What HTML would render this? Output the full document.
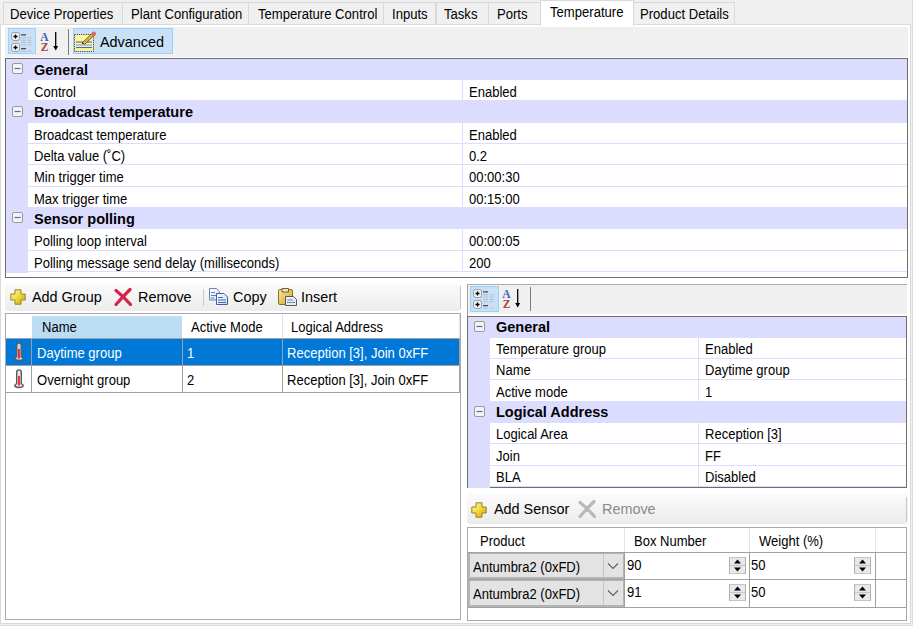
<!DOCTYPE html><html><head><meta charset="utf-8"><style>
html,body{margin:0;padding:0;}
body{width:913px;height:626px;overflow:hidden;position:relative;background:#f0f0f0;font-family:"Liberation Sans",sans-serif;font-size:13px;color:#000;}
div{box-sizing:border-box;}
.t{position:absolute;white-space:pre;line-height:normal;}
.t > span{display:inline-block;}
</style></head><body>
<div style="position:absolute;left:0px;top:24px;width:913px;height:602px;background:#fff;border-left:1px solid #d9d9d9;border-top:1px solid #d9d9d9;"></div>
<div style="position:absolute;left:910px;top:24px;width:1px;height:600px;background:#d9d9d9;"></div>
<div style="position:absolute;left:0px;top:623px;width:911px;height:1px;background:#d9d9d9;"></div>
<div style="position:absolute;left:911px;top:0px;width:2px;height:626px;background:#f0f0f0;"></div>
<div style="position:absolute;left:912px;top:0px;width:1px;height:626px;background:#dcdcdc;"></div>
<div style="position:absolute;left:0px;top:624px;width:913px;height:2px;background:#f0f0f0;"></div>
<div style="position:absolute;left:0px;top:625px;width:913px;height:1px;background:#dcdcdc;"></div>
<div style="position:absolute;left:3px;top:2px;width:119.5px;height:22px;background:#f0f0f0;border:1px solid #d9d9d9;border-bottom:none;"></div>
<div class="t" style="left:10px;top:6px;font-size:14px;transform:scaleX(0.935);transform-origin:0 0;">Device Properties</div>
<div style="position:absolute;left:121.5px;top:2px;width:127.80000000000001px;height:22px;background:#f0f0f0;border:1px solid #d9d9d9;border-bottom:none;"></div>
<div class="t" style="left:130.6px;top:6px;font-size:14px;transform:scaleX(0.935);transform-origin:0 0;">Plant Configuration</div>
<div style="position:absolute;left:248.3px;top:2px;width:136.09999999999997px;height:22px;background:#f0f0f0;border:1px solid #d9d9d9;border-bottom:none;"></div>
<div class="t" style="left:257.7px;top:6px;font-size:14px;transform:scaleX(0.935);transform-origin:0 0;">Temperature Control</div>
<div style="position:absolute;left:383.4px;top:2px;width:53.10000000000002px;height:22px;background:#f0f0f0;border:1px solid #d9d9d9;border-bottom:none;"></div>
<div class="t" style="left:391.8px;top:6px;font-size:14px;transform:scaleX(0.935);transform-origin:0 0;">Inputs</div>
<div style="position:absolute;left:435.5px;top:2px;width:53.80000000000001px;height:22px;background:#f0f0f0;border:1px solid #d9d9d9;border-bottom:none;"></div>
<div class="t" style="left:444.4px;top:6px;font-size:14px;transform:scaleX(0.935);transform-origin:0 0;">Tasks</div>
<div style="position:absolute;left:488.3px;top:2px;width:52.69999999999999px;height:22px;background:#f0f0f0;border:1px solid #d9d9d9;border-bottom:none;"></div>
<div class="t" style="left:497px;top:6px;font-size:14px;transform:scaleX(0.935);transform-origin:0 0;">Ports</div>
<div style="position:absolute;left:540px;top:0px;width:94.39999999999998px;height:26px;background:#fff;border:1px solid #d9d9d9;border-bottom:none;"></div>
<div class="t" style="left:550px;top:4px;font-size:14px;transform:scaleX(0.935);transform-origin:0 0;">Temperature</div>
<div style="position:absolute;left:633.4px;top:2px;width:101.20000000000005px;height:22px;background:#f0f0f0;border:1px solid #d9d9d9;border-bottom:none;"></div>
<div class="t" style="left:640px;top:6px;font-size:14px;transform:scaleX(0.935);transform-origin:0 0;">Product Details</div>
<div style="position:absolute;left:5px;top:27px;width:903px;height:30px;background:#f0f0f0;"></div>
<div style="position:absolute;left:7.5px;top:28px;width:28.5px;height:26px;background:#c9e0f7;border:1px solid #99d1ff;"></div>
<svg style="position:absolute;left:10px;top:31px" width="24" height="22" viewBox="0 0 24 22">
<rect x="1.5" y="1.5" width="8" height="8" rx="2" fill="#f3eee6" stroke="#8da0b8"/>
<rect x="1.5" y="12.5" width="8" height="8" rx="2" fill="#f3eee6" stroke="#8da0b8"/>
<path d="M5.5 3.5v4M3.5 5.5h4M5.5 14.5v4M3.5 16.5h4" stroke="#000" stroke-width="1.3"/>
<path d="M11 3.8h5M11 17.6h5" stroke="#4a4a4a" stroke-width="1.3"/>
<path d="M11 6.8h5M17.6 6.8h4M11 9.2h5M17.6 9.2h4M11 11.5h5M17.6 11.5h4M11 13.9h5M17.6 13.9h4M11 20.1h5M17.6 20.1h4" stroke="#b4bcc6" stroke-width="0.9"/>
</svg>
<svg style="position:absolute;left:39px;top:31px" width="22" height="22" viewBox="0 0 22 22">
<text x="5.5" y="9.6" text-anchor="middle" font-family="Liberation Serif" font-weight="bold" font-size="11.5" fill="#3d63b8">A</text>
<text x="5.7" y="20.2" text-anchor="middle" font-family="Liberation Serif" font-weight="bold" font-size="11.5" fill="#a84040">Z</text>
<path d="M16.7 1v15" stroke="#000" stroke-width="1.3"/><path d="M14.2 15l2.5 4.5 2.5-4.5z" fill="#000"/>
</svg>
<div style="position:absolute;left:68px;top:29px;width:1px;height:26px;background:#7a7a7a;"></div>
<div style="position:absolute;left:72.5px;top:28px;width:100px;height:26px;background:#c9e0f7;border:1px solid #99d1ff;"></div>
<svg style="position:absolute;left:73px;top:30px" width="24" height="24" viewBox="0 0 24 24">
<rect x="1.5" y="4.5" width="19" height="17" fill="#faf5a0" stroke="#444" stroke-width="1" stroke-dasharray="1.2 1"/>
<path d="M3 12h16" stroke="#3a6ad8" stroke-width="1.1"/>
<path d="M3 15h16" stroke="#8aa0c0" stroke-width="1.1"/>
<path d="M3 17.5h16" stroke="#3a6ad8" stroke-width="1.1"/>
<path d="M9.5 12.5l10-9.5 2 2-10 9.5z" fill="#e0b040" stroke="#5a4a30" stroke-width="0.8"/>
<path d="M9.5 12.5l-0.8 1.8 1.8-0.8z" fill="#000"/>
<circle cx="20.8" cy="3.8" r="2.2" fill="#d86a58"/>
</svg>
<div class="t" style="left:99.5px;top:32.7px;font-size:15px;transform:scaleX(0.96);transform-origin:0 0;">Advanced</div>
<div style="position:absolute;left:5px;top:58px;width:903px;height:220px;border:1px solid #6e6e6e;background:#fff"></div>
<div style="position:absolute;left:6px;top:59px;width:22px;height:213.82999999999998px;background:#dcdcff"></div>
<div style="position:absolute;left:6px;top:59px;width:901px;height:21.033px;background:#dcdcff"></div>
<svg style="position:absolute;left:11.5px;top:63.3px" width="11" height="11" viewBox="0 0 11 11">
<rect x="0.5" y="0.5" width="10" height="10" rx="1.5" fill="#f4f4f4" stroke="#9a9a9a"/>
<path d="M2.5 5.5h6" stroke="#5a6ab8" stroke-width="1.2"/>
</svg>
<div class="t" style="left:34px;top:61px;font-size:15px;transform:scaleX(0.968);transform-origin:0 0;font-weight:bold;">General</div>
<div style="position:absolute;left:28px;top:80.033px;width:879px;height:21.333px;background:#fff;border-bottom:1px solid #dcdcff"></div>
<div style="position:absolute;left:461.6px;top:80.033px;width:1px;height:21.333px;background:#dcdcff"></div>
<div class="t" style="left:34px;top:84.033px;font-size:14px;transform:scaleX(0.93);transform-origin:0 0;">Control</div>
<div class="t" style="left:469.0px;top:84.033px;font-size:14px;transform:scaleX(0.93);transform-origin:0 0;">Enabled</div>
<div style="position:absolute;left:6px;top:101.366px;width:901px;height:21.333px;background:#dcdcff"></div>
<svg style="position:absolute;left:11.5px;top:105.666px" width="11" height="11" viewBox="0 0 11 11">
<rect x="0.5" y="0.5" width="10" height="10" rx="1.5" fill="#f4f4f4" stroke="#9a9a9a"/>
<path d="M2.5 5.5h6" stroke="#5a6ab8" stroke-width="1.2"/>
</svg>
<div class="t" style="left:34px;top:103.366px;font-size:15px;transform:scaleX(0.968);transform-origin:0 0;font-weight:bold;">Broadcast temperature</div>
<div style="position:absolute;left:28px;top:122.699px;width:879px;height:21.332999999999984px;background:#fff;border-bottom:1px solid #dcdcff"></div>
<div style="position:absolute;left:461.6px;top:122.699px;width:1px;height:21.332999999999984px;background:#dcdcff"></div>
<div class="t" style="left:34px;top:126.69900000000001px;font-size:14px;transform:scaleX(0.93);transform-origin:0 0;">Broadcast temperature</div>
<div class="t" style="left:469.0px;top:126.69900000000001px;font-size:14px;transform:scaleX(0.93);transform-origin:0 0;">Enabled</div>
<div style="position:absolute;left:28px;top:144.03199999999998px;width:879px;height:21.333000000000027px;background:#fff;border-bottom:1px solid #dcdcff"></div>
<div style="position:absolute;left:461.6px;top:144.03199999999998px;width:1px;height:21.333000000000027px;background:#dcdcff"></div>
<div class="t" style="left:34px;top:148.03199999999998px;font-size:14px;transform:scaleX(0.93);transform-origin:0 0;">Delta value (&#730;C)</div>
<div class="t" style="left:469.0px;top:148.03199999999998px;font-size:14px;transform:scaleX(0.93);transform-origin:0 0;">0.2</div>
<div style="position:absolute;left:28px;top:165.365px;width:879px;height:21.33299999999997px;background:#fff;border-bottom:1px solid #dcdcff"></div>
<div style="position:absolute;left:461.6px;top:165.365px;width:1px;height:21.33299999999997px;background:#dcdcff"></div>
<div class="t" style="left:34px;top:169.365px;font-size:14px;transform:scaleX(0.93);transform-origin:0 0;">Min trigger time</div>
<div class="t" style="left:469.0px;top:169.365px;font-size:14px;transform:scaleX(0.93);transform-origin:0 0;">00:00:30</div>
<div style="position:absolute;left:28px;top:186.69799999999998px;width:879px;height:21.333000000000027px;background:#fff;border-bottom:1px solid #dcdcff"></div>
<div style="position:absolute;left:461.6px;top:186.69799999999998px;width:1px;height:21.333000000000027px;background:#dcdcff"></div>
<div class="t" style="left:34px;top:190.69799999999998px;font-size:14px;transform:scaleX(0.93);transform-origin:0 0;">Max trigger time</div>
<div class="t" style="left:469.0px;top:190.69799999999998px;font-size:14px;transform:scaleX(0.93);transform-origin:0 0;">00:15:00</div>
<div style="position:absolute;left:6px;top:208.031px;width:901px;height:21.33299999999997px;background:#dcdcff"></div>
<svg style="position:absolute;left:11.5px;top:212.33100000000002px" width="11" height="11" viewBox="0 0 11 11">
<rect x="0.5" y="0.5" width="10" height="10" rx="1.5" fill="#f4f4f4" stroke="#9a9a9a"/>
<path d="M2.5 5.5h6" stroke="#5a6ab8" stroke-width="1.2"/>
</svg>
<div class="t" style="left:34px;top:210.031px;font-size:15px;transform:scaleX(0.968);transform-origin:0 0;font-weight:bold;">Sensor polling</div>
<div style="position:absolute;left:28px;top:229.36399999999998px;width:879px;height:21.333000000000027px;background:#fff;border-bottom:1px solid #dcdcff"></div>
<div style="position:absolute;left:461.6px;top:229.36399999999998px;width:1px;height:21.333000000000027px;background:#dcdcff"></div>
<div class="t" style="left:34px;top:233.36399999999998px;font-size:14px;transform:scaleX(0.93);transform-origin:0 0;">Polling loop interval</div>
<div class="t" style="left:469.0px;top:233.36399999999998px;font-size:14px;transform:scaleX(0.93);transform-origin:0 0;">00:00:05</div>
<div style="position:absolute;left:28px;top:250.697px;width:879px;height:21.33299999999997px;background:#fff;border-bottom:1px solid #dcdcff"></div>
<div style="position:absolute;left:461.6px;top:250.697px;width:1px;height:21.33299999999997px;background:#dcdcff"></div>
<div class="t" style="left:34px;top:254.697px;font-size:14px;transform:scaleX(0.93);transform-origin:0 0;">Polling message send delay (milliseconds)</div>
<div class="t" style="left:469.0px;top:254.697px;font-size:14px;transform:scaleX(0.93);transform-origin:0 0;">200</div>
<div style="position:absolute;left:5px;top:283px;width:456px;height:28px;border-radius:3px;background:linear-gradient(#fbfbfb,#ececec);"></div>
<div style="position:absolute;left:460px;top:286px;width:1px;height:23px;background:#c4c4c4;"></div>
<svg style="position:absolute;left:9.5px;top:289px" width="16" height="16" viewBox="0 0 16 16">
<defs><linearGradient id="gp9289" x1="0" y1="0" x2="1" y2="1"><stop offset="0" stop-color="#fff8b0"/><stop offset="0.5" stop-color="#f0d840"/><stop offset="1" stop-color="#c8a000"/></linearGradient></defs>
<path d="M5 0.8h6v4.2h4.2v6h-4.2v4.2h-6v-4.2h-4.2v-6h4.2z" fill="url(#gp9289)" stroke="#9a8420" stroke-width="1" stroke-linejoin="round"/>
</svg>
<div class="t" style="left:32px;top:287.7px;font-size:15px;transform:scaleX(0.96);transform-origin:0 0;">Add Group</div>
<svg style="position:absolute;left:113.5px;top:287.5px" width="18" height="18" viewBox="0 0 18 18">
<path d="M2 2.5Q9 8 16.5 16.5M16 1.5Q9.5 8 2 16.5" stroke="#d4244e" stroke-width="3.2" stroke-linecap="round" fill="none"/>
</svg>
<div class="t" style="left:138px;top:287.7px;font-size:15px;transform:scaleX(0.96);transform-origin:0 0;">Remove</div>
<div style="position:absolute;left:203px;top:289px;width:1px;height:17px;background:#c8c8c8;"></div>
<svg style="position:absolute;left:207.5px;top:287px" width="22" height="20" viewBox="0 0 22 20">
<defs><linearGradient id="cpg" x1="0" y1="0" x2="1" y2="1"><stop offset="0" stop-color="#ffffff"/><stop offset="1" stop-color="#d0def2"/></linearGradient></defs>
<path d="M1.5 1.5h7l3 3v8.5h-10z" fill="url(#cpg)" stroke="#6a84b8"/>
<path d="M3 5.5h4M3 8.5h6.5M3 11h3" stroke="#5a80c8" stroke-width="1"/>
<path d="M8.5 6.5h7.5l3.5 3.5v7.5h-11z" fill="url(#cpg)" stroke="#3f5fa8"/>
<path d="M10 10.5h5M10 13h8M10 15.5h8" stroke="#3a68c0" stroke-width="1"/>
</svg>
<div class="t" style="left:233px;top:287.7px;font-size:15px;transform:scaleX(0.96);transform-origin:0 0;">Copy</div>
<svg style="position:absolute;left:277px;top:287px" width="22" height="20" viewBox="0 0 22 20">
<defs><linearGradient id="psg" x1="0" y1="0" x2="1" y2="1"><stop offset="0" stop-color="#fbe9a0"/><stop offset="1" stop-color="#d4a020"/></linearGradient></defs>
<rect x="1.5" y="2.5" width="14" height="15" rx="1.5" fill="url(#psg)" stroke="#8c6c20"/>
<path d="M5 1.5h6.5v3.5h-6.5z" fill="#f3e6b0" stroke="#6e6040"/>
<path d="M8.5 9.5h8l3 3v6h-11z" fill="#e8edf4" stroke="#50596c"/>
<path d="M10 13h6M10 15.5h8" stroke="#7888a8" stroke-width="1.1"/>
</svg>
<div class="t" style="left:301px;top:287.7px;font-size:15px;transform:scaleX(0.96);transform-origin:0 0;">Insert</div>
<div style="position:absolute;left:5px;top:312.5px;width:456px;height:307.5px;border:1px solid #a8a8b0;background:#fff"></div>
<div style="position:absolute;left:32px;top:315.6px;width:150px;height:22.4px;background:#bcdcf4;"></div>
<div style="position:absolute;left:282px;top:314px;width:1px;height:24px;background:#e5e5e5;"></div>
<div style="position:absolute;left:459px;top:314px;width:1px;height:24px;background:#e5e5e5;"></div>
<div class="t" style="left:42px;top:318.5px;font-size:14px;transform:scaleX(0.93);transform-origin:0 0;">Name</div>
<div class="t" style="left:191px;top:318.5px;font-size:14px;transform:scaleX(0.93);transform-origin:0 0;">Active Mode</div>
<div class="t" style="left:291px;top:318.5px;font-size:14px;transform:scaleX(0.93);transform-origin:0 0;">Logical Address</div>
<div style="position:absolute;left:6px;top:338.0px;width:454px;height:27.4px;background:#0078d7;"></div>
<div style="position:absolute;left:6px;top:365.0px;width:454px;height:1px;background:#a0a0a0;"></div>
<div class="t" style="left:36.6px;top:345.0px;font-size:14px;transform:scaleX(0.93);transform-origin:0 0;color:#fff;">Daytime group</div>
<div class="t" style="left:187px;top:345.0px;font-size:14px;transform:scaleX(0.93);transform-origin:0 0;color:#fff;">1</div>
<div class="t" style="left:287px;top:345.0px;font-size:14px;transform:scaleX(0.93);transform-origin:0 0;color:#fff;">Reception [3], Join 0xFF</div>
<svg style="position:absolute;left:13.2px;top:342.0px" width="12" height="20" viewBox="0 0 12 20">
<path d="M3.7 3.2a2.3 2.3 0 0 1 4.6 0v11.5c1.1 0.5 1.9 1.1 1.9 1.9 0 1.1-1.9 1.9-4.2 1.9s-4.2-0.8-4.2-1.9c0-0.8 0.8-1.4 1.9-1.9z" fill="#b8d4ee" stroke="#5a5a5a" stroke-width="1.4"/>
<path d="M6 7v9.5" stroke="#f00000" stroke-width="1.5"/>
</svg>
<div style="position:absolute;left:6px;top:392.4px;width:454px;height:1px;background:#a0a0a0;"></div>
<div class="t" style="left:36.6px;top:372.4px;font-size:14px;transform:scaleX(0.93);transform-origin:0 0;">Overnight group</div>
<div class="t" style="left:187px;top:372.4px;font-size:14px;transform:scaleX(0.93);transform-origin:0 0;">2</div>
<div class="t" style="left:287px;top:372.4px;font-size:14px;transform:scaleX(0.93);transform-origin:0 0;">Reception [3], Join 0xFF</div>
<svg style="position:absolute;left:13.2px;top:369.4px" width="12" height="20" viewBox="0 0 12 20">
<path d="M3.7 3.2a2.3 2.3 0 0 1 4.6 0v11.5c1.1 0.5 1.9 1.1 1.9 1.9 0 1.1-1.9 1.9-4.2 1.9s-4.2-0.8-4.2-1.9c0-0.8 0.8-1.4 1.9-1.9z" fill="#e6e6e6" stroke="#5a5a5a" stroke-width="1.4"/>
<path d="M6 7v9.5" stroke="#f00000" stroke-width="1.5"/>
</svg>
<div style="position:absolute;left:6px;top:338px;width:454px;height:1px;background:#a0a0a0;"></div>
<div style="position:absolute;left:31px;top:338px;width:1px;height:55px;background:#a0a0a0;"></div>
<div style="position:absolute;left:181.5px;top:338px;width:1px;height:55px;background:#a0a0a0;"></div>
<div style="position:absolute;left:282px;top:338px;width:1px;height:55px;background:#a0a0a0;"></div>
<div style="position:absolute;left:459px;top:338px;width:1px;height:55px;background:#a0a0a0;"></div>
<div style="position:absolute;left:467px;top:284px;width:440px;height:30px;background:#f0f0f0;border-left:1px solid #a0a0a0;border-top:1px solid #acacac;"></div>
<div style="position:absolute;left:467px;top:284px;width:1px;height:204px;background:#a0a0a0;"></div>
<div style="position:absolute;left:470px;top:286px;width:29px;height:26px;background:#c9e0f7;border:1px solid #99d1ff;"></div>
<svg style="position:absolute;left:472px;top:288px" width="24" height="22" viewBox="0 0 24 22">
<rect x="1.5" y="1.5" width="8" height="8" rx="2" fill="#f3eee6" stroke="#8da0b8"/>
<rect x="1.5" y="12.5" width="8" height="8" rx="2" fill="#f3eee6" stroke="#8da0b8"/>
<path d="M5.5 3.5v4M3.5 5.5h4M5.5 14.5v4M3.5 16.5h4" stroke="#000" stroke-width="1.3"/>
<path d="M11 3.8h5M11 17.6h5" stroke="#4a4a4a" stroke-width="1.3"/>
<path d="M11 6.8h5M17.6 6.8h4M11 9.2h5M17.6 9.2h4M11 11.5h5M17.6 11.5h4M11 13.9h5M17.6 13.9h4M11 20.1h5M17.6 20.1h4" stroke="#b4bcc6" stroke-width="0.9"/>
</svg>
<svg style="position:absolute;left:501px;top:288px" width="22" height="22" viewBox="0 0 22 22">
<text x="5.5" y="9.6" text-anchor="middle" font-family="Liberation Serif" font-weight="bold" font-size="11.5" fill="#3d63b8">A</text>
<text x="5.7" y="20.2" text-anchor="middle" font-family="Liberation Serif" font-weight="bold" font-size="11.5" fill="#a84040">Z</text>
<path d="M16.7 1v15" stroke="#000" stroke-width="1.3"/><path d="M14.2 15l2.5 4.5 2.5-4.5z" fill="#000"/>
</svg>
<div style="position:absolute;left:530px;top:287px;width:1px;height:24px;background:#7a7a7a;"></div>
<div style="position:absolute;left:467px;top:316px;width:440px;height:172px;border:1px solid #6e6e6e;background:#fff"></div>
<div style="position:absolute;left:468px;top:317px;width:22px;height:171.164px;background:#dcdcff"></div>
<div style="position:absolute;left:468px;top:317px;width:438px;height:20.633000000000038px;background:#dcdcff"></div>
<svg style="position:absolute;left:473.5px;top:321.3px" width="11" height="11" viewBox="0 0 11 11">
<rect x="0.5" y="0.5" width="10" height="10" rx="1.5" fill="#f4f4f4" stroke="#9a9a9a"/>
<path d="M2.5 5.5h6" stroke="#5a6ab8" stroke-width="1.2"/>
</svg>
<div class="t" style="left:496px;top:318.3px;font-size:15px;transform:scaleX(0.968);transform-origin:0 0;font-weight:bold;">General</div>
<div style="position:absolute;left:490px;top:337.63300000000004px;width:416px;height:21.33299999999997px;background:#fff;border-bottom:1px solid #dcdcff"></div>
<div style="position:absolute;left:698px;top:337.63300000000004px;width:1px;height:21.33299999999997px;background:#dcdcff"></div>
<div class="t" style="left:496px;top:340.93300000000005px;font-size:14px;transform:scaleX(0.93);transform-origin:0 0;">Temperature group</div>
<div class="t" style="left:705.4px;top:340.93300000000005px;font-size:14px;transform:scaleX(0.93);transform-origin:0 0;">Enabled</div>
<div style="position:absolute;left:490px;top:358.966px;width:416px;height:21.33299999999997px;background:#fff;border-bottom:1px solid #dcdcff"></div>
<div style="position:absolute;left:698px;top:358.966px;width:1px;height:21.33299999999997px;background:#dcdcff"></div>
<div class="t" style="left:496px;top:362.266px;font-size:14px;transform:scaleX(0.93);transform-origin:0 0;">Name</div>
<div class="t" style="left:705.4px;top:362.266px;font-size:14px;transform:scaleX(0.93);transform-origin:0 0;">Daytime group</div>
<div style="position:absolute;left:490px;top:380.299px;width:416px;height:21.333000000000027px;background:#fff;border-bottom:1px solid #dcdcff"></div>
<div style="position:absolute;left:698px;top:380.299px;width:1px;height:21.333000000000027px;background:#dcdcff"></div>
<div class="t" style="left:496px;top:383.599px;font-size:14px;transform:scaleX(0.93);transform-origin:0 0;">Active mode</div>
<div class="t" style="left:705.4px;top:383.599px;font-size:14px;transform:scaleX(0.93);transform-origin:0 0;">1</div>
<div style="position:absolute;left:468px;top:401.632px;width:438px;height:21.333000000000027px;background:#dcdcff"></div>
<svg style="position:absolute;left:473.5px;top:405.932px" width="11" height="11" viewBox="0 0 11 11">
<rect x="0.5" y="0.5" width="10" height="10" rx="1.5" fill="#f4f4f4" stroke="#9a9a9a"/>
<path d="M2.5 5.5h6" stroke="#5a6ab8" stroke-width="1.2"/>
</svg>
<div class="t" style="left:496px;top:402.932px;font-size:15px;transform:scaleX(0.968);transform-origin:0 0;font-weight:bold;">Logical Address</div>
<div style="position:absolute;left:490px;top:422.96500000000003px;width:416px;height:21.33299999999997px;background:#fff;border-bottom:1px solid #dcdcff"></div>
<div style="position:absolute;left:698px;top:422.96500000000003px;width:1px;height:21.33299999999997px;background:#dcdcff"></div>
<div class="t" style="left:496px;top:426.26500000000004px;font-size:14px;transform:scaleX(0.93);transform-origin:0 0;">Logical Area</div>
<div class="t" style="left:705.4px;top:426.26500000000004px;font-size:14px;transform:scaleX(0.93);transform-origin:0 0;">Reception [3]</div>
<div style="position:absolute;left:490px;top:444.298px;width:416px;height:21.33299999999997px;background:#fff;border-bottom:1px solid #dcdcff"></div>
<div style="position:absolute;left:698px;top:444.298px;width:1px;height:21.33299999999997px;background:#dcdcff"></div>
<div class="t" style="left:496px;top:447.598px;font-size:14px;transform:scaleX(0.93);transform-origin:0 0;">Join</div>
<div class="t" style="left:705.4px;top:447.598px;font-size:14px;transform:scaleX(0.93);transform-origin:0 0;">FF</div>
<div style="position:absolute;left:490px;top:465.631px;width:416px;height:21.333000000000027px;background:#fff;border-bottom:1px solid #dcdcff"></div>
<div style="position:absolute;left:698px;top:465.631px;width:1px;height:21.333000000000027px;background:#dcdcff"></div>
<div class="t" style="left:496px;top:468.931px;font-size:14px;transform:scaleX(0.93);transform-origin:0 0;">BLA</div>
<div class="t" style="left:705.4px;top:468.931px;font-size:14px;transform:scaleX(0.93);transform-origin:0 0;">Disabled</div>
<div style="position:absolute;left:467px;top:493px;width:441px;height:31px;border-radius:3px;background:linear-gradient(#fbfbfb,#ececec);"></div>
<div style="position:absolute;left:906px;top:497px;width:1px;height:24px;background:#c4c4c4;"></div>
<svg style="position:absolute;left:471px;top:501.5px" width="16" height="16" viewBox="0 0 16 16">
<defs><linearGradient id="gp471501" x1="0" y1="0" x2="1" y2="1"><stop offset="0" stop-color="#fff8b0"/><stop offset="0.5" stop-color="#f0d840"/><stop offset="1" stop-color="#c8a000"/></linearGradient></defs>
<path d="M5 0.8h6v4.2h4.2v6h-4.2v4.2h-6v-4.2h-4.2v-6h4.2z" fill="url(#gp471501)" stroke="#9a8420" stroke-width="1" stroke-linejoin="round"/>
</svg>
<div class="t" style="left:493.5px;top:500px;font-size:15px;transform:scaleX(0.96);transform-origin:0 0;">Add Sensor</div>
<svg style="position:absolute;left:578px;top:500px" width="18" height="18" viewBox="0 0 18 18">
<path d="M2 2.5Q9 8 16.5 16.5M16 1.5Q9.5 8 2 16.5" stroke="#b8b8b8" stroke-width="3.2" stroke-linecap="round" fill="none"/>
</svg>
<div class="t" style="left:601.5px;top:500px;font-size:15px;transform:scaleX(0.96);transform-origin:0 0;color:#8a8a8a">Remove</div>
<div style="position:absolute;left:467px;top:526.5px;width:440px;height:94px;border:1px solid #a8a8b0;background:#fff"></div>
<div style="position:absolute;left:624px;top:527.5px;width:1px;height:24.5px;background:#e5e5e5;"></div>
<div style="position:absolute;left:749px;top:527.5px;width:1px;height:24.5px;background:#e5e5e5;"></div>
<div style="position:absolute;left:874.5px;top:527.5px;width:1px;height:24.5px;background:#e5e5e5;"></div>
<div class="t" style="left:480px;top:533px;font-size:14px;transform:scaleX(0.93);transform-origin:0 0;">Product</div>
<div class="t" style="left:633.5px;top:533px;font-size:14px;transform:scaleX(0.93);transform-origin:0 0;">Box Number</div>
<div class="t" style="left:759px;top:533px;font-size:14px;transform:scaleX(0.93);transform-origin:0 0;">Weight (%)</div>
<div style="position:absolute;left:468px;top:552.0px;width:438px;height:1px;background:#a0a0a0;"></div>
<div style="position:absolute;left:468px;top:553.0px;width:156px;height:26.3px;background:#e3e3e3;border:2px solid #b4b4b4;border-right-width:1px;border-top-width:1px;"></div>
<div style="position:absolute;left:603px;top:554.0px;width:1px;height:24px;background:#c4c4c4;"></div>
<svg style="position:absolute;left:607px;top:562.0px" width="12" height="8" viewBox="0 0 12 8"><path d="M1 1.5l5 5 5-5" fill="none" stroke="#606060" stroke-width="1.1"/></svg>
<div class="t" style="left:473px;top:559.0px;font-size:14px;transform:scaleX(0.93);transform-origin:0 0;">Antumbra2 (0xFD)</div>
<div class="t" style="left:626.5px;top:557.0px;font-size:14px;transform:scaleX(0.93);transform-origin:0 0;">90</div>
<div class="t" style="left:751px;top:557.0px;font-size:14px;transform:scaleX(0.93);transform-origin:0 0;">50</div>
<svg style="position:absolute;left:729px;top:556.5px" width="17" height="17" viewBox="0 0 17 17"><rect x="0.5" y="0.5" width="16" height="16" fill="#e9e9e9" stroke="#c4c4c4"/><path d="M0.5 0.5v16M16.5 0.5v16" stroke="#b0b0b0"/><path d="M1 8.5h15" stroke="#c8c8c8" stroke-width="1.2"/><path d="M5 6.5h7l-3.5-4z M5 10.5h7l-3.5 4z" fill="#000"/></svg>
<svg style="position:absolute;left:854px;top:556.5px" width="17" height="17" viewBox="0 0 17 17"><rect x="0.5" y="0.5" width="16" height="16" fill="#e9e9e9" stroke="#c4c4c4"/><path d="M0.5 0.5v16M16.5 0.5v16" stroke="#b0b0b0"/><path d="M1 8.5h15" stroke="#c8c8c8" stroke-width="1.2"/><path d="M5 6.5h7l-3.5-4z M5 10.5h7l-3.5 4z" fill="#000"/></svg>
<div style="position:absolute;left:468px;top:579.3px;width:438px;height:1px;background:#a0a0a0;"></div>
<div style="position:absolute;left:468px;top:580.3px;width:156px;height:26.3px;background:#e3e3e3;border:2px solid #b4b4b4;border-right-width:1px;border-top-width:1px;"></div>
<div style="position:absolute;left:603px;top:581.3px;width:1px;height:24px;background:#c4c4c4;"></div>
<svg style="position:absolute;left:607px;top:589.3px" width="12" height="8" viewBox="0 0 12 8"><path d="M1 1.5l5 5 5-5" fill="none" stroke="#606060" stroke-width="1.1"/></svg>
<div class="t" style="left:473px;top:586.3px;font-size:14px;transform:scaleX(0.93);transform-origin:0 0;">Antumbra2 (0xFD)</div>
<div class="t" style="left:626.5px;top:584.3px;font-size:14px;transform:scaleX(0.93);transform-origin:0 0;">91</div>
<div class="t" style="left:751px;top:584.3px;font-size:14px;transform:scaleX(0.93);transform-origin:0 0;">50</div>
<svg style="position:absolute;left:729px;top:583.8px" width="17" height="17" viewBox="0 0 17 17"><rect x="0.5" y="0.5" width="16" height="16" fill="#e9e9e9" stroke="#c4c4c4"/><path d="M0.5 0.5v16M16.5 0.5v16" stroke="#b0b0b0"/><path d="M1 8.5h15" stroke="#c8c8c8" stroke-width="1.2"/><path d="M5 6.5h7l-3.5-4z M5 10.5h7l-3.5 4z" fill="#000"/></svg>
<svg style="position:absolute;left:854px;top:583.8px" width="17" height="17" viewBox="0 0 17 17"><rect x="0.5" y="0.5" width="16" height="16" fill="#e9e9e9" stroke="#c4c4c4"/><path d="M0.5 0.5v16M16.5 0.5v16" stroke="#b0b0b0"/><path d="M1 8.5h15" stroke="#c8c8c8" stroke-width="1.2"/><path d="M5 6.5h7l-3.5-4z M5 10.5h7l-3.5 4z" fill="#000"/></svg>
<div style="position:absolute;left:468px;top:606.5px;width:438px;height:1px;background:#a0a0a0;"></div>
<div style="position:absolute;left:624px;top:552px;width:1px;height:55px;background:#a0a0a0;"></div>
<div style="position:absolute;left:749px;top:552px;width:1px;height:55px;background:#a0a0a0;"></div>
<div style="position:absolute;left:874.5px;top:552px;width:1px;height:55px;background:#a0a0a0;"></div>
<div style="position:absolute;left:906px;top:552px;width:1px;height:55px;background:#a0a0a0;"></div>
</body></html>
